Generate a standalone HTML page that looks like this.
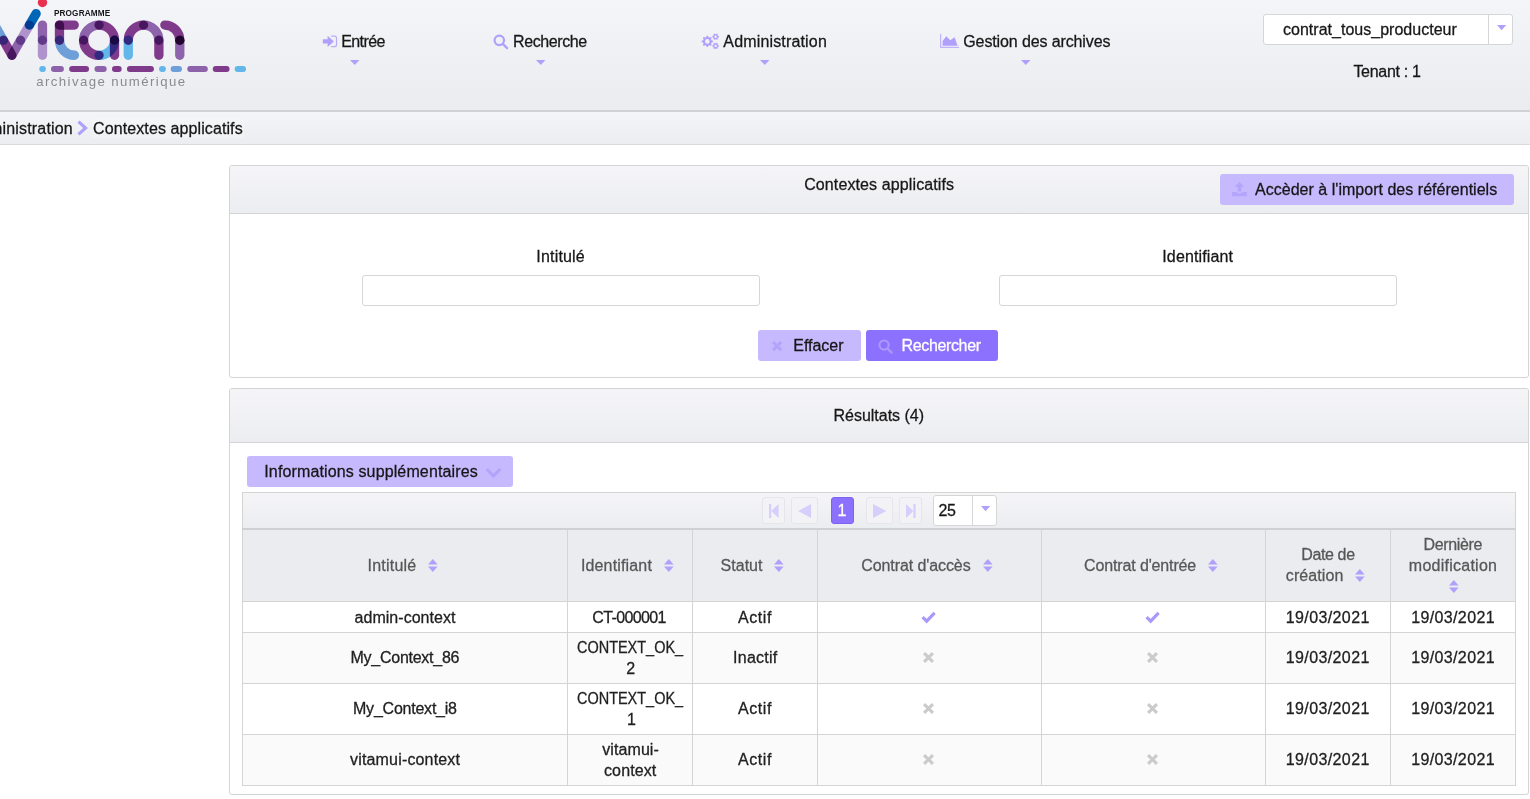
<!DOCTYPE html>
<html lang="fr">
<head>
<meta charset="utf-8">
<title>Contextes applicatifs</title>
<style>
*{box-sizing:border-box;margin:0;padding:0}
html,body{width:1530px;height:799px;overflow:hidden;background:#fff}
body{font-family:"Liberation Sans",sans-serif;font-size:16px;color:#171717;position:relative}
.abs{position:absolute}
.t{position:absolute;white-space:nowrap;line-height:20px;height:20px;-webkit-text-stroke:0.28px currentColor}
#hdr{left:0;top:0;width:1530px;height:110px;background:linear-gradient(#f4f5f8,#ebecf0)}
#hdrline{left:0;top:110px;width:1530px;height:2px;background:#d2d2d4}
#crumb{left:0;top:112px;width:1530px;height:32px;background:linear-gradient(#f4f5f8,#ecedf0)}
#crumbline{left:0;top:144px;width:1530px;height:1px;background:#dadadc}
.panel{position:absolute;border:1px solid #d4d4d6;border-radius:3px;background:#fff;overflow:hidden}
.phead{position:absolute;left:0;top:0;right:0;background:linear-gradient(#f5f5f8,#ecedf0);border-bottom:1px solid #d4d4d6}
.btn{position:absolute;background:#c6b9fd;border-radius:3px;height:31px}
.btn.dark{background:#8b71fd}
.inp{position:absolute;height:31px;border:1px solid #d6d6d6;border-radius:3px;background:#fff}
svg{position:absolute;overflow:visible}
.g{position:absolute;background:#d4d4d4}
.cell{position:absolute;background:#fff}
.cell.h{background:#ebecf0}
.cell.alt{background:#fafafb}
.pb{position:absolute;top:497px;height:27px;border:1px solid #e6e6ea;border-radius:3px;background:#f3f3f6}
</style>
</head>
<body>

<div id="hdr" class="abs"></div><div id="hdrline" class="abs"></div><div id="crumb" class="abs"></div><div id="crumbline" class="abs"></div>
<svg id="logo" style="left:0;top:0;isolation:isolate" width="260" height="100" viewBox="0 0 260 100"><g style="isolation:isolate"><path style="mix-blend-mode:multiply" d="M36.11 13.59 L29.4 25.06" stroke="#0067b6" stroke-width="9.3" stroke-linecap="round" fill="none"/><path style="mix-blend-mode:multiply" d="M29.4 25.06 L20.56 40.27" stroke="#ae93cc" stroke-width="9.3" stroke-linecap="round" fill="none"/><path style="mix-blend-mode:multiply" d="M20.56 40.27 L11.89 55.23" stroke="#8d63ab" stroke-width="9.3" stroke-linecap="round" fill="none"/><path style="mix-blend-mode:multiply" d="M11.89 55.23 L3.4 40.27" stroke="#7f3a8c" stroke-width="9.3" stroke-linecap="round" fill="none"/><path style="mix-blend-mode:multiply" d="M3.4 40.27 L-5.27 25.06" stroke="#6f9fd9" stroke-width="9.3" stroke-linecap="round" fill="none"/><path style="mix-blend-mode:multiply" d="M42.48 25.06 L42.48 40.27" stroke="#8d63ab" stroke-width="9.3" stroke-linecap="round" fill="none"/><path style="mix-blend-mode:multiply" d="M42.48 40.27 L42.48 55.23" stroke="#ae93cc" stroke-width="9.3" stroke-linecap="round" fill="none"/><path style="mix-blend-mode:multiply" d="M59.47 25.06 L74.26 25.06" stroke="#7f3a8c" stroke-width="9.3" stroke-linecap="round" fill="none"/><path style="mix-blend-mode:multiply" d="M59.47 25.06 L59.47 40.27" stroke="#7f3a8c" stroke-width="9.3" stroke-linecap="round" fill="none"/><path style="mix-blend-mode:multiply" d="M59.47 40.27 A14.95 14.95 0 0 0 74.43 55.23" stroke="#6f9fd9" stroke-width="9.3" stroke-linecap="round" fill="none"/><path style="mix-blend-mode:multiply" d="M83.6 40.19 A15.46 15.12 0 0 1 99.07 25.06" stroke="#8d63ab" stroke-width="9.3" stroke-linecap="round" fill="none"/><path style="mix-blend-mode:multiply" d="M99.07 25.06 A15.46 15.12 0 0 1 114.53 40.19" stroke="#7f3a8c" stroke-width="9.3" stroke-linecap="round" fill="none"/><path style="mix-blend-mode:multiply" d="M83.6 40.19 A15.46 15.12 0 0 0 99.07 55.31" stroke="#7f3a8c" stroke-width="9.3" stroke-linecap="round" fill="none"/><path style="mix-blend-mode:multiply" d="M99.07 55.31 A15.46 15.12 0 0 0 114.53 40.19" stroke="#63b6e9" stroke-width="9.3" stroke-linecap="round" fill="none"/><path style="mix-blend-mode:multiply" d="M114.53 40.19 L114.53 55.23" stroke="#7f3a8c" stroke-width="9.3" stroke-linecap="round" fill="none"/><path style="mix-blend-mode:multiply" d="M128.29 55.23 L128.29 40.27" stroke="#63b6e9" stroke-width="9.3" stroke-linecap="round" fill="none"/><path style="mix-blend-mode:multiply" d="M128.29 40.27 A15.29 15.21 0 0 1 143.59 25.06" stroke="#7f3a8c" stroke-width="9.3" stroke-linecap="round" fill="none"/><path style="mix-blend-mode:multiply" d="M143.59 25.06 A15.29 15.21 0 0 1 158.88 40.27" stroke="#8d63ab" stroke-width="9.3" stroke-linecap="round" fill="none"/><path style="mix-blend-mode:multiply" d="M158.88 40.27 L158.88 55.23" stroke="#7f3a8c" stroke-width="9.3" stroke-linecap="round" fill="none"/><path style="mix-blend-mode:multiply" d="M164.83 25.06 A14.95 15.21 0 0 1 179.78 40.27" stroke="#7f3a8c" stroke-width="9.3" stroke-linecap="round" fill="none"/><path style="mix-blend-mode:multiply" d="M179.78 40.27 L179.78 55.23" stroke="#8d63ab" stroke-width="9.3" stroke-linecap="round" fill="none"/></g><circle cx="179.78" cy="40.27" r="4.6" fill="#21052f"/><path d="M42.25 69.05 L42.88 69.05" stroke="#63b6e9" stroke-width="6" stroke-linecap="round" fill="none"/><path d="M53.98 69.05 L60.89 69.05" stroke="#8d62ab" stroke-width="6" stroke-linecap="round" fill="none"/><path d="M72.16 69.05 L86.04 69.05" stroke="#7f3a8c" stroke-width="6" stroke-linecap="round" fill="none"/><path d="M97.48 69.05 L103.71 69.05" stroke="#8d62ab" stroke-width="6" stroke-linecap="round" fill="none"/><path d="M114.98 69.05 L118.67 69.05" stroke="#7f3a8c" stroke-width="6" stroke-linecap="round" fill="none"/><path d="M129.93 69.05 L150.95 69.05" stroke="#7f3a8c" stroke-width="6" stroke-linecap="round" fill="none"/><path d="M162.05 69.05 L162.85 69.05" stroke="#63b6e9" stroke-width="6" stroke-linecap="round" fill="none"/><path d="M173.60 69.05 L178.99 69.05" stroke="#6f9fd9" stroke-width="6" stroke-linecap="round" fill="none"/><path d="M190.26 69.05 L204.82 69.05" stroke="#8d62ab" stroke-width="6" stroke-linecap="round" fill="none"/><path d="M215.74 69.05 L226.57 69.05" stroke="#7f3a8c" stroke-width="6" stroke-linecap="round" fill="none"/><path d="M237.66 69.05 L243.05 69.05" stroke="#63b6e9" stroke-width="6" stroke-linecap="round" fill="none"/><circle cx="42.48" cy="2.55" r="4.7" fill="#e9304f"/></svg>
<svg style="left:0;top:0" width="260" height="100"><text x="53.9" y="15.65" font-family="Liberation Sans" font-weight="bold" font-size="8.2" fill="#161616" textLength="56.3" lengthAdjust="spacing">PROGRAMME</text><text x="36.2" y="85.8" font-family="Liberation Sans" font-size="13.2" fill="#8b8b8b" textLength="148.9" lengthAdjust="spacing">archivage numérique</text></svg>
<div class="t " style="left:341.20px;top:32px;color:#171717;letter-spacing:-0.600px;">Entrée</div>
<svg style="left:349.75px;top:60px" width="9.5" height="5" viewBox="0 0 9.5 5"><path d="M0 0H9.5L4.75 5Z" fill="#b1a0fb"/></svg>
<div class="t " style="left:513.00px;top:32px;color:#171717;letter-spacing:-0.400px;">Recherche</div>
<svg style="left:535.95px;top:60px" width="9.5" height="5" viewBox="0 0 9.5 5"><path d="M0 0H9.5L4.75 5Z" fill="#b1a0fb"/></svg>
<div class="t " style="left:723.30px;top:32px;color:#171717;letter-spacing:0.162px;">Administration</div>
<svg style="left:759.85px;top:60px" width="9.5" height="5" viewBox="0 0 9.5 5"><path d="M0 0H9.5L4.75 5Z" fill="#b1a0fb"/></svg>
<div class="t " style="left:963.30px;top:32px;color:#171717;letter-spacing:-0.121px;">Gestion des archives</div>
<svg style="left:1020.85px;top:60px" width="9.5" height="5" viewBox="0 0 9.5 5"><path d="M0 0H9.5L4.75 5Z" fill="#b1a0fb"/></svg>
<svg style="left:322px;top:35px" width="16" height="13" viewBox="0 0 16 13"><path d="M0.8 4.3H5.6V0.8L11.9 6.4L5.6 12V8.6H0.8Z" fill="#b1a0fb"/><path d="M9.6 1.2H12.6Q14.5 1.2 14.5 3.1V9.7Q14.5 11.6 12.6 11.6H9.6" stroke="#b9aafc" stroke-width="1.2" fill="none" stroke-linecap="round"/></svg>
<svg style="left:492.8px;top:34px" width="15.5" height="15.5" viewBox="0 0 16 16"><circle cx="6.5" cy="6.5" r="4.9" stroke="#b1a0fb" stroke-width="2.3" fill="none"/><path d="M10.2 10.2L14.5 14.5" stroke="#b1a0fb" stroke-width="2.5" stroke-linecap="round"/></svg>
<svg style="left:700px;top:32px" width="20" height="18" viewBox="0 0 20 18"><path d="M12.97 8.84L12.97 9.96L11.41 10.65L11.09 11.43L11.71 13.02L10.92 13.81L9.33 13.19L8.55 13.51L7.86 15.07L6.74 15.07L6.05 13.51L5.27 13.19L3.68 13.81L2.89 13.02L3.51 11.43L3.19 10.65L1.63 9.96L1.63 8.84L3.19 8.15L3.51 7.37L2.89 5.78L3.68 4.99L5.27 5.61L6.05 5.29L6.74 3.73L7.86 3.73L8.55 5.29L9.33 5.61L10.92 4.99L11.71 5.78L11.09 7.37L11.41 8.15Z M9.6 9.4 A2.3 2.3 0 1 0 5.0 9.4 A2.3 2.3 0 1 0 9.6 9.4Z" fill="#b1a0fb" fill-rule="evenodd"/><path d="M18.97 4.26L18.97 5.14L17.91 5.66L17.58 6.22L17.67 7.40L16.90 7.84L15.93 7.18L15.27 7.18L14.30 7.84L13.53 7.40L13.62 6.22L13.29 5.66L12.23 5.14L12.23 4.26L13.29 3.74L13.62 3.18L13.53 2.00L14.30 1.56L15.27 2.22L15.93 2.22L16.90 1.56L17.67 2.00L17.58 3.18L17.91 3.74Z M16.8 4.7 A1.2 1.2 0 1 0 14.4 4.7 A1.2 1.2 0 1 0 16.8 4.7Z" fill="#b1a0fb" fill-rule="evenodd"/><path d="M18.97 13.46L18.97 14.34L17.91 14.86L17.58 15.42L17.67 16.60L16.90 17.04L15.93 16.38L15.27 16.38L14.30 17.04L13.53 16.60L13.62 15.42L13.29 14.86L12.23 14.34L12.23 13.46L13.29 12.94L13.62 12.38L13.53 11.20L14.30 10.76L15.27 11.42L15.93 11.42L16.90 10.76L17.67 11.20L17.58 12.38L17.91 12.94Z M16.8 13.9 A1.2 1.2 0 1 0 14.4 13.9 A1.2 1.2 0 1 0 16.8 13.9Z" fill="#b1a0fb" fill-rule="evenodd"/></svg>
<svg style="left:940px;top:34px" width="19" height="14" viewBox="0 0 19 14"><path d="M0.6 0V13.4H19" stroke="#c0b3fc" stroke-width="1.2" fill="none"/><path d="M2.6 11.8V7L6.3 2.2L10.3 6.3L14.6 3.2L17.6 11.8Z" fill="#b1a0fb"/></svg>
<div class="abs" style="left:1263px;top:14px;width:250px;height:31px;background:#fff;border:1px solid #d6d6d6;border-radius:3px"></div>
<div class="abs" style="left:1488px;top:15px;width:1px;height:29px;background:#d6d6d6"></div>
<svg style="left:1496.70px;top:25px" width="9.2" height="5.2" viewBox="0 0 9.2 5.2"><path d="M0 0H9.2L4.6 5.2Z" fill="#b1a0fb"/></svg>
<div class="t " style="left:1283.00px;top:20px;color:#171717;letter-spacing:0.018px;">contrat_tous_producteur</div>
<div class="t " style="left:1353.40px;top:62px;color:#171717;letter-spacing:-0.300px;">Tenant : 1</div>
<div class="t " style="left:-30.80px;top:119px;color:#171717;letter-spacing:0.162px;">Administration</div>
<svg style="left:77.5px;top:121px" width="10" height="14" viewBox="0 0 10 14"><path d="M1.6 1.6L7.6 7L1.6 12.4" stroke="#b1a0fb" stroke-width="3.1" fill="none" stroke-linecap="square" stroke-linejoin="miter"/></svg>
<div class="abs" style="left:92px;top:119px;width:152px;height:19px;background:rgba(255,255,255,.18)"></div>
<div class="t " style="left:93.10px;top:119px;color:#171717;letter-spacing:0.095px;">Contextes applicatifs</div>
<div class="panel" style="left:229px;top:165px;width:1300px;height:213px"><div class="phead" style="height:48px"></div></div>
<div class="t " style="left:804.20px;top:175px;color:#171717;letter-spacing:0.110px;">Contextes applicatifs</div>
<div class="btn" style="left:1220px;top:174px;width:294px"></div>
<svg style="left:1232px;top:181.5px" width="15" height="14.5" viewBox="0 0 15 14.5"><path d="M7.45 -0.1L12.1 4.9H9.2V9.5H5.8V4.9H2.8Z" fill="#b5a4fc"/><path d="M0.2 10.1H4.4Q5 11.5 7.5 11.5Q10 11.5 10.6 10.1H14.8V14.3H0.2Z" fill="#b5a4fc"/></svg>
<div class="t " style="left:1255.00px;top:180px;color:#171717;letter-spacing:0.024px;">Accèder à l'import des référentiels</div>
<div class="t " style="left:536.30px;top:247px;color:#171717;letter-spacing:0.186px;">Intitulé</div>
<div class="t " style="left:1162.30px;top:247px;color:#171717;letter-spacing:0.130px;">Identifiant</div>
<div class="inp" style="left:362px;top:275px;width:398px"></div>
<div class="inp" style="left:999px;top:275px;width:398px"></div>
<div class="btn" style="left:758px;top:330px;width:103px"></div>
<div class="btn dark" style="left:866px;top:330px;width:132px"></div>
<svg style="left:772.20px;top:340.80px" width="10.2" height="10.2" viewBox="-5.1 -5.1 10.2 10.2"><path d="M-4.05 -4.05L4.05 4.05M4.05 -4.05L-4.05 4.05" stroke="#b3a3fb" stroke-width="3.0" stroke-linecap="butt"/></svg>
<div class="t " style="left:793.30px;top:336px;color:#171717;letter-spacing:-0.033px;">Effacer</div>
<svg style="left:878px;top:338.7px" width="15" height="15" viewBox="0 0 16 16"><circle cx="6.5" cy="6.5" r="4.9" stroke="#ab97fe" stroke-width="2.3" fill="none"/><path d="M10.2 10.2L14.5 14.5" stroke="#ab97fe" stroke-width="2.5" stroke-linecap="round"/></svg>
<div class="t " style="left:901.60px;top:336px;color:#fff;letter-spacing:-0.367px;">Rechercher</div>
<div class="panel" style="left:229px;top:388px;width:1300px;height:407px"><div class="phead" style="height:54px"></div></div>
<div class="t " style="left:833.50px;top:406px;color:#171717;letter-spacing:-0.017px;">Résultats (4)</div>
<div class="btn" style="left:247px;top:456px;width:266px"></div>
<div class="t " style="left:264.30px;top:462px;color:#171717;letter-spacing:0.130px;">Informations supplémentaires</div>
<svg style="left:486px;top:467.8px" width="15" height="11" viewBox="0 0 15 11"><path d="M1.8 2.2L7.5 7.8L13.2 2.2" stroke="#b3a3fb" stroke-width="3" fill="none" stroke-linecap="square"/></svg>
<div class="g" style="left:242px;top:492px;width:1274px;height:294px"></div>
<div class="abs" style="left:243px;top:493px;width:1272px;height:35px;background:linear-gradient(#f5f5f8,#ecedf0)"></div>
<div class="g" style="left:242px;top:528px;width:1274px;height:2px;background:#d0d0d2"></div>
<div class="cell h" style="left:243px;top:530px;width:324px;height:71px"></div>
<div class="cell h" style="left:568px;top:530px;width:124px;height:71px"></div>
<div class="cell h" style="left:693px;top:530px;width:124px;height:71px"></div>
<div class="cell h" style="left:818px;top:530px;width:223px;height:71px"></div>
<div class="cell h" style="left:1042px;top:530px;width:223px;height:71px"></div>
<div class="cell h" style="left:1266px;top:530px;width:124px;height:71px"></div>
<div class="cell h" style="left:1391px;top:530px;width:124px;height:71px"></div>
<div class="cell" style="left:243px;top:602px;width:324px;height:30px"></div>
<div class="cell" style="left:568px;top:602px;width:124px;height:30px"></div>
<div class="cell" style="left:693px;top:602px;width:124px;height:30px"></div>
<div class="cell" style="left:818px;top:602px;width:223px;height:30px"></div>
<div class="cell" style="left:1042px;top:602px;width:223px;height:30px"></div>
<div class="cell" style="left:1266px;top:602px;width:124px;height:30px"></div>
<div class="cell" style="left:1391px;top:602px;width:124px;height:30px"></div>
<div class="cell alt" style="left:243px;top:633px;width:324px;height:50px"></div>
<div class="cell alt" style="left:568px;top:633px;width:124px;height:50px"></div>
<div class="cell alt" style="left:693px;top:633px;width:124px;height:50px"></div>
<div class="cell alt" style="left:818px;top:633px;width:223px;height:50px"></div>
<div class="cell alt" style="left:1042px;top:633px;width:223px;height:50px"></div>
<div class="cell alt" style="left:1266px;top:633px;width:124px;height:50px"></div>
<div class="cell alt" style="left:1391px;top:633px;width:124px;height:50px"></div>
<div class="cell" style="left:243px;top:684px;width:324px;height:50px"></div>
<div class="cell" style="left:568px;top:684px;width:124px;height:50px"></div>
<div class="cell" style="left:693px;top:684px;width:124px;height:50px"></div>
<div class="cell" style="left:818px;top:684px;width:223px;height:50px"></div>
<div class="cell" style="left:1042px;top:684px;width:223px;height:50px"></div>
<div class="cell" style="left:1266px;top:684px;width:124px;height:50px"></div>
<div class="cell" style="left:1391px;top:684px;width:124px;height:50px"></div>
<div class="cell alt" style="left:243px;top:735px;width:324px;height:50px"></div>
<div class="cell alt" style="left:568px;top:735px;width:124px;height:50px"></div>
<div class="cell alt" style="left:693px;top:735px;width:124px;height:50px"></div>
<div class="cell alt" style="left:818px;top:735px;width:223px;height:50px"></div>
<div class="cell alt" style="left:1042px;top:735px;width:223px;height:50px"></div>
<div class="cell alt" style="left:1266px;top:735px;width:124px;height:50px"></div>
<div class="cell alt" style="left:1391px;top:735px;width:124px;height:50px"></div>
<div class="pb" style="left:762px;width:23px"></div>
<div class="pb" style="left:791px;width:27px"></div>
<div class="pb" style="left:866px;width:27px"></div>
<div class="pb" style="left:899px;width:23px"></div>
<svg style="left:768.5px;top:503.5px" width="10" height="14" viewBox="0 0 10 14"><rect x="0" y="0" width="2.2" height="14" fill="#d6cffb"/><path d="M9.6 0V14L2.2 7Z" fill="#d6cffb"/></svg>
<svg style="left:797.8px;top:503.5px" width="13.5" height="14" viewBox="0 0 13 14" preserveAspectRatio="none"><path d="M12.6 0V14L0 7Z" fill="#d6cffb"/></svg>
<svg style="left:873px;top:503.5px" width="13.8" height="14" viewBox="0 0 13 14" preserveAspectRatio="none"><path d="M0 0V14L12.6 7Z" fill="#d6cffb"/></svg>
<svg style="left:906px;top:503.5px" width="10" height="14" viewBox="0 0 10 14"><rect x="7.4" y="0" width="2.2" height="14" fill="#d6cffb"/><path d="M0 0V14L7.4 7Z" fill="#d6cffb"/></svg>
<div class="abs" style="left:831px;top:497px;width:23px;height:27px;background:#8b71fd;border:1px solid #7c62f5;border-radius:3px"></div>
<div class="t " style="left:837.60px;top:501px;color:#fff;">1</div>
<div class="abs" style="left:933px;top:495px;width:64px;height:31px;background:#fff;border:1px solid #d6d6d6;border-radius:3px"></div>
<div class="abs" style="left:972px;top:496px;width:1px;height:29px;background:#d6d6d6"></div>
<div class="t " style="left:938.40px;top:501px;color:#171717;letter-spacing:-0.200px;">25</div>
<svg style="left:980.80px;top:506.2px" width="9.2" height="5.2" viewBox="0 0 9.2 5.2"><path d="M0 0H9.2L4.6 5.2Z" fill="#b1a0fb"/></svg>
<div class="t " style="left:367.50px;top:556px;color:#575757;letter-spacing:0.229px;">Intitulé</div>
<svg style="left:428px;top:559.2px" width="9.6" height="13" viewBox="0 0 9.6 13"><path d="M0 5.4H9.6L4.8 0Z" fill="#b1a0fb"/><path d="M0 7.6H9.6L4.8 13Z" fill="#b1a0fb"/></svg>
<div class="t " style="left:580.90px;top:556px;color:#575757;letter-spacing:0.160px;">Identifiant</div>
<svg style="left:663.5px;top:559.2px" width="9.6" height="13" viewBox="0 0 9.6 13"><path d="M0 5.4H9.6L4.8 0Z" fill="#b1a0fb"/><path d="M0 7.6H9.6L4.8 13Z" fill="#b1a0fb"/></svg>
<div class="t " style="left:720.50px;top:556px;color:#575757;letter-spacing:0.040px;">Statut</div>
<svg style="left:774.3px;top:559.2px" width="9.6" height="13" viewBox="0 0 9.6 13"><path d="M0 5.4H9.6L4.8 0Z" fill="#b1a0fb"/><path d="M0 7.6H9.6L4.8 13Z" fill="#b1a0fb"/></svg>
<div class="t " style="left:861.20px;top:556px;color:#575757;letter-spacing:-0.086px;">Contrat d'accès</div>
<svg style="left:982.8px;top:559.2px" width="9.6" height="13" viewBox="0 0 9.6 13"><path d="M0 5.4H9.6L4.8 0Z" fill="#b1a0fb"/><path d="M0 7.6H9.6L4.8 13Z" fill="#b1a0fb"/></svg>
<div class="t " style="left:1084.10px;top:556px;color:#575757;letter-spacing:-0.140px;">Contrat d'entrée</div>
<svg style="left:1208px;top:559.2px" width="9.6" height="13" viewBox="0 0 9.6 13"><path d="M0 5.4H9.6L4.8 0Z" fill="#b1a0fb"/><path d="M0 7.6H9.6L4.8 13Z" fill="#b1a0fb"/></svg>
<div class="t " style="left:1301.20px;top:545px;color:#575757;letter-spacing:-0.367px;">Date de</div>
<div class="t " style="left:1285.80px;top:566px;color:#575757;letter-spacing:0.086px;">création</div>
<svg style="left:1355.2px;top:568.9px" width="9.6" height="13" viewBox="0 0 9.6 13"><path d="M0 5.4H9.6L4.8 0Z" fill="#b1a0fb"/><path d="M0 7.6H9.6L4.8 13Z" fill="#b1a0fb"/></svg>
<div class="t " style="left:1423.50px;top:535px;color:#575757;letter-spacing:-0.343px;">Dernière</div>
<div class="t " style="left:1408.80px;top:556px;color:#575757;letter-spacing:0.255px;">modification</div>
<svg style="left:1448.9px;top:580px" width="9.6" height="13" viewBox="0 0 9.6 13"><path d="M0 5.4H9.6L4.8 0Z" fill="#b1a0fb"/><path d="M0 7.6H9.6L4.8 13Z" fill="#b1a0fb"/></svg>
<div class="t " style="left:354.60px;top:608px;color:#212121;letter-spacing:0.025px;">admin-context</div>
<div class="t " style="left:592.30px;top:608px;color:#212121;letter-spacing:-0.625px;">CT-000001</div>
<div class="t " style="left:738.10px;top:608px;color:#212121;letter-spacing:0.550px;">Actif</div>
<div class="t " style="left:350.50px;top:648px;color:#212121;letter-spacing:-0.258px;">My_Context_86</div>
<div class="t " style="left:576.90px;top:638px;color:#212121;transform:scaleX(0.9039);transform-origin:0 0;">CONTEXT_OK_</div>
<div class="t " style="left:626.20px;top:659px;color:#212121;">2</div>
<div class="t " style="left:733.00px;top:648px;color:#212121;letter-spacing:0.267px;">Inactif</div>
<div class="t " style="left:353.00px;top:699px;color:#212121;letter-spacing:-0.225px;">My_Context_i8</div>
<div class="t " style="left:576.90px;top:689px;color:#212121;transform:scaleX(0.9039);transform-origin:0 0;">CONTEXT_OK_</div>
<div class="t " style="left:627.00px;top:710px;color:#212121;">1</div>
<div class="t " style="left:738.10px;top:699px;color:#212121;letter-spacing:0.550px;">Actif</div>
<div class="t " style="left:350.00px;top:750px;color:#212121;letter-spacing:0.171px;">vitamui-context</div>
<div class="t " style="left:602.30px;top:740px;color:#212121;letter-spacing:0.071px;">vitamui-</div>
<div class="t " style="left:604.00px;top:761px;color:#212121;letter-spacing:0.117px;">context</div>
<div class="t " style="left:738.10px;top:750px;color:#212121;letter-spacing:0.550px;">Actif</div>
<div class="t " style="left:1285.70px;top:608px;color:#212121;letter-spacing:0.400px;">19/03/2021</div>
<div class="t " style="left:1411.20px;top:608px;color:#212121;letter-spacing:0.367px;">19/03/2021</div>
<div class="t " style="left:1285.70px;top:648px;color:#212121;letter-spacing:0.400px;">19/03/2021</div>
<div class="t " style="left:1411.20px;top:648px;color:#212121;letter-spacing:0.367px;">19/03/2021</div>
<div class="t " style="left:1285.70px;top:699px;color:#212121;letter-spacing:0.400px;">19/03/2021</div>
<div class="t " style="left:1411.20px;top:699px;color:#212121;letter-spacing:0.367px;">19/03/2021</div>
<div class="t " style="left:1285.70px;top:750px;color:#212121;letter-spacing:0.400px;">19/03/2021</div>
<div class="t " style="left:1411.20px;top:750px;color:#212121;letter-spacing:0.367px;">19/03/2021</div>
<svg style="left:921.1px;top:610.7px" width="15" height="12" viewBox="0 0 15 12"><path d="M1.6 6.1L5.7 10.2L13.6 1.9" stroke="#ab98fc" stroke-width="3.2" fill="none" stroke-linecap="butt" stroke-linejoin="miter"/></svg>
<svg style="left:1145.1px;top:610.7px" width="15" height="12" viewBox="0 0 15 12"><path d="M1.6 6.1L5.7 10.2L13.6 1.9" stroke="#ab98fc" stroke-width="3.2" fill="none" stroke-linecap="butt" stroke-linejoin="miter"/></svg>
<svg style="left:923.10px;top:652.10px" width="11" height="11" viewBox="-5.5 -5.5 11 11"><path d="M-4.415 -4.415L4.415 4.415M4.415 -4.415L-4.415 4.415" stroke="#cbcbcb" stroke-width="3.1" stroke-linecap="butt"/></svg>
<svg style="left:1147.10px;top:652.10px" width="11" height="11" viewBox="-5.5 -5.5 11 11"><path d="M-4.415 -4.415L4.415 4.415M4.415 -4.415L-4.415 4.415" stroke="#cbcbcb" stroke-width="3.1" stroke-linecap="butt"/></svg>
<svg style="left:923.10px;top:703.10px" width="11" height="11" viewBox="-5.5 -5.5 11 11"><path d="M-4.415 -4.415L4.415 4.415M4.415 -4.415L-4.415 4.415" stroke="#cbcbcb" stroke-width="3.1" stroke-linecap="butt"/></svg>
<svg style="left:1147.10px;top:703.10px" width="11" height="11" viewBox="-5.5 -5.5 11 11"><path d="M-4.415 -4.415L4.415 4.415M4.415 -4.415L-4.415 4.415" stroke="#cbcbcb" stroke-width="3.1" stroke-linecap="butt"/></svg>
<svg style="left:923.10px;top:754.10px" width="11" height="11" viewBox="-5.5 -5.5 11 11"><path d="M-4.415 -4.415L4.415 4.415M4.415 -4.415L-4.415 4.415" stroke="#cbcbcb" stroke-width="3.1" stroke-linecap="butt"/></svg>
<svg style="left:1147.10px;top:754.10px" width="11" height="11" viewBox="-5.5 -5.5 11 11"><path d="M-4.415 -4.415L4.415 4.415M4.415 -4.415L-4.415 4.415" stroke="#cbcbcb" stroke-width="3.1" stroke-linecap="butt"/></svg>

</body>
</html>
